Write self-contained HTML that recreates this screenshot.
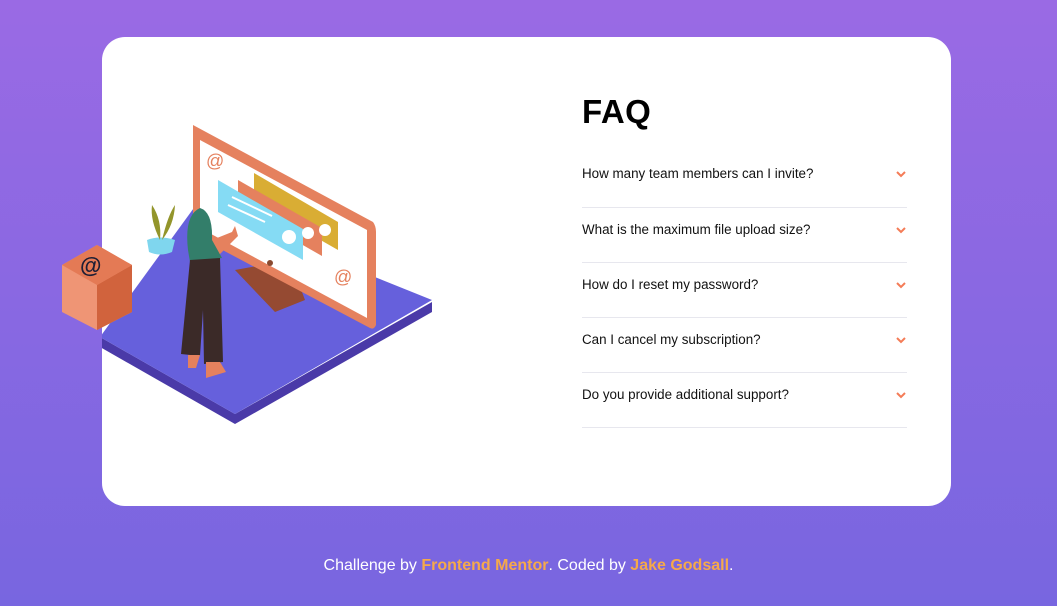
<!DOCTYPE html>
<html><head><meta charset="utf-8"><style>
*{margin:0;padding:0;box-sizing:border-box}
html,body{width:1057px;height:606px;overflow:hidden}
body{background:linear-gradient(180deg,#9a6ae4 0%,#7866e0 100%);font-family:"Liberation Sans",sans-serif;position:relative}
.card{position:absolute;left:102px;top:37px;width:849px;height:469px;background:#fff;border-radius:23px}
h1{position:absolute;left:582px;top:93px;font-size:33px;font-weight:bold;color:#000;letter-spacing:0.5px}
.q{position:absolute;left:582px;width:325px;height:55px;border-bottom:1px solid #e7e7ee;font-size:13.4px;color:#111}
.q span{position:absolute;left:0;top:0}
.q svg{position:absolute;right:1px;top:5px}
.foot{position:absolute;left:0;width:1057px;top:557px;text-align:center;color:#fff;font-size:16px}
.foot b{color:#f5a94a}
</style></head><body>
<div class="card"></div>
<svg style="position:absolute;left:0;top:0" width="1057" height="606">
<defs><clipPath id="c"><rect x="102" y="37" width="849" height="469" rx="23"/></clipPath></defs>
<g clip-path="url(#c)">
<path d="M100 347 L235 424 L432 312 L432 302 L235 414 L100 337Z" fill="#4a3aa8"/>
<path d="M100 337 L196 205 L432 300 L235 414Z" fill="#6660dc"/>
</g>
<path d="M235 270 L290 260 L305 300 L275 312Z" fill="#954a32"/>
<path d="M193 125 L373 222 Q376 226 376 232 L376 325 Q374 330 370 328 L196 236 Q193 233 193 228Z" fill="#e5815e"/>
<path d="M200 140 L367 230 L367 318 L200 228Z" fill="#fff"/>
<path d="M254 173 L338 222 L338 250 L254 202Z" fill="#d9ad34"/>
<path d="M238 180 L322 228 L322 256 L238 208Z" fill="#e5815e"/>
<path d="M218 180 L303 229 L303 260 L218 212Z" fill="#85dbf4"/>
<circle cx="289" cy="237" r="7" fill="#fff"/><circle cx="308" cy="233" r="6" fill="#fff"/><circle cx="325" cy="230" r="6" fill="#fff"/>
<path d="M228 205 L265 222 M232 197 L272 216" stroke="#fff" stroke-width="2"/>
<text x="206" y="167" font-size="18" fill="#e5815e" font-family="Liberation Sans">@</text>
<text x="334" y="283" font-size="18" fill="#e5815e" font-family="Liberation Sans">@</text>
<circle cx="270" cy="263" r="3" fill="#8a4a30"/>
<path d="M147 240 Q160 235 175 240 L172 252 Q160 257 149 252Z" fill="#7fd6ee"/>
<path d="M160 240 Q150 220 152 205 Q162 220 160 240 M162 240 Q168 215 175 205 Q174 225 162 240" fill="#93952b"/>
<path d="M62 265 L97 245 L132 265 L132 312 L97 330 L62 312Z" fill="#ef9575"/>
<path d="M97 285 L132 265 L132 312 L97 330Z" fill="#d1633d"/>
<path d="M62 265 L97 245 L132 265 L97 285Z" fill="#e47a55"/>
<text x="80" y="273" font-size="22" fill="#1d1e35" font-family="Liberation Sans" font-weight="bold">@</text>
<path d="M212 240 L232 232 L235 226 L238 236 L216 258Z" fill="#e5815e"/>
<path d="M188 250 Q184 215 200 208 Q213 212 212 240 L222 258 L190 262Z" fill="#337e6a"/>
<path d="M190 260 L220 258 L223 362 L204 364 L203 310 L200 356 L181 354 Z" fill="#3b2a28"/>
<path d="M188 355 L200 355 L196 368 L188 368Z M206 362 L220 362 L226 372 L206 378Z" fill="#e5815e"/>
</svg>
<h1>FAQ</h1>
<div class="q" style="top:166px;height:42px"><span>How many team members can I invite?</span><svg width="10" height="7" viewBox="0 0 10 7"><path d="M1 1l4 4 4-4" stroke="#f47c57" stroke-width="2" fill="none"/></svg></div>
<div class="q" style="top:208px"><span style="top:14px">What is the maximum file upload size?</span><svg style="top:19px" width="10" height="7" viewBox="0 0 10 7"><path d="M1 1l4 4 4-4" stroke="#f47c57" stroke-width="2" fill="none"/></svg></div>
<div class="q" style="top:263px"><span style="top:14px">How do I reset my password?</span><svg style="top:19px" width="10" height="7" viewBox="0 0 10 7"><path d="M1 1l4 4 4-4" stroke="#f47c57" stroke-width="2" fill="none"/></svg></div>
<div class="q" style="top:318px"><span style="top:14px">Can I cancel my subscription?</span><svg style="top:19px" width="10" height="7" viewBox="0 0 10 7"><path d="M1 1l4 4 4-4" stroke="#f47c57" stroke-width="2" fill="none"/></svg></div>
<div class="q" style="top:373px"><span style="top:14px">Do you provide additional support?</span><svg style="top:19px" width="10" height="7" viewBox="0 0 10 7"><path d="M1 1l4 4 4-4" stroke="#f47c57" stroke-width="2" fill="none"/></svg></div>
<div class="foot">Challenge by <b>Frontend Mentor</b>. Coded by <b>Jake Godsall</b>.</div>
</body></html>
